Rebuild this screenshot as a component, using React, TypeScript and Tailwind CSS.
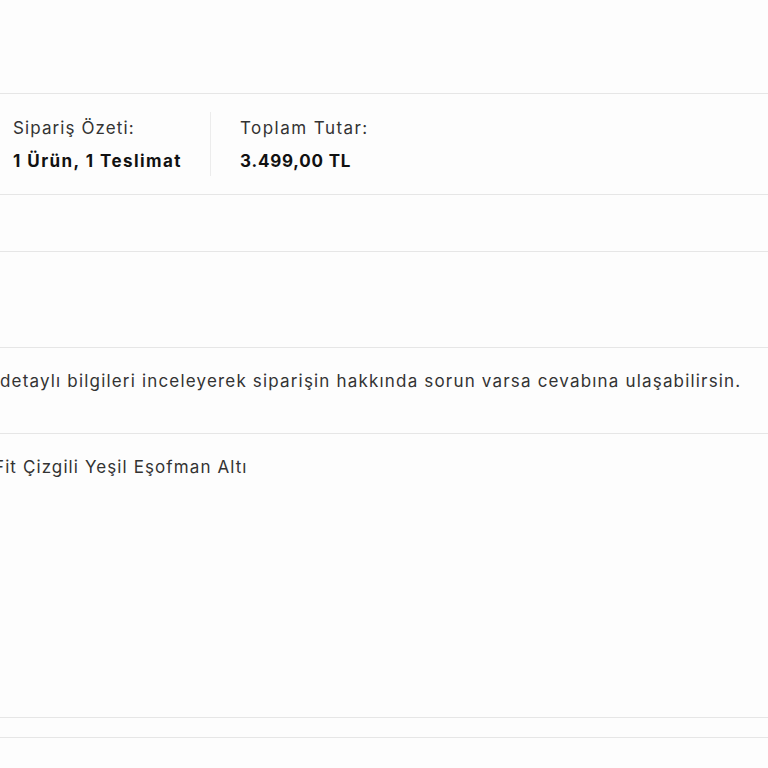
import React from "react";

const font = { fontFamily: "Inter, 'Noto Sans', sans-serif" };

export default function App() {
  return (
    <div className="w-[768px] h-[768px] overflow-hidden bg-[#fdfdfd] text-[#222]" style={font}>
      <div className="h-[93px]" />

      {/* Summary */}
      <div className="border-y border-[#e6e6e6] h-[102px] flex items-center">
        <div className="flex items-center">
          <div className="w-[210px] pl-[13px] flex flex-col gap-[9px]">
            <span className="text-[17px] leading-[24px] tracking-[1.1px] text-[#333]">Sipariş Özeti:</span>
            <span className="text-[17px] leading-[24px] font-bold tracking-[1.45px] text-[#111]">1 Ürün, 1 Teslimat</span>
          </div>
          <div className="w-px h-[64px] bg-[#ececec]" />
          <div className="pl-[29px] flex flex-col gap-[9px]">
            <span className="text-[17px] leading-[24px] tracking-[1.45px] text-[#333]">Toplam Tutar:</span>
            <span className="text-[17px] leading-[24px] font-bold tracking-[0.8px] text-[#111]">3.499,00 TL</span>
          </div>
        </div>
      </div>

      <div className="h-[56px]" />

      <div className="border-y border-[#e6e6e6] h-[97px]" />

      <div className="h-[86px] pt-[21px] border-b border-[#e6e6e6]">
        <p className="text-[17px] leading-[24px] tracking-[1.18px] text-[#333] whitespace-nowrap">
          detaylı bilgileri inceleyerek siparişin hakkında sorun varsa cevabına ulaşabilirsin.
        </p>
      </div>

      <div className="h-[283px] pt-[21px]">
        <p className="text-[17px] leading-[24px] tracking-[1.1px] text-[#333] whitespace-nowrap -ml-[6px]">
          Fit Çizgili Yeşil Eşofman Altı
        </p>
      </div>

      <div className="border-y border-[#e6e6e6] h-[21px]" />
    </div>
  );
}
